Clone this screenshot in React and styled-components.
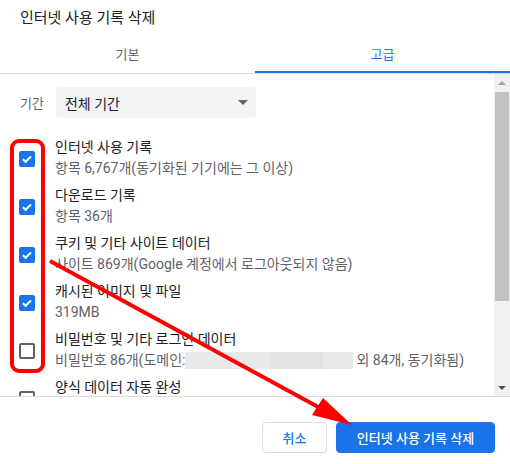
import React from 'react';
import styled, { createGlobalStyle } from 'styled-components';

const GlobalStyle = createGlobalStyle`
  html, body {
    margin: 0;
    padding: 0;
    background: #fff;
  }
  body {
    font-family: Roboto, "Noto Sans CJK KR", sans-serif;
    color: #202124;
  }
`;

const Dialog = styled.div`
  position: relative;
  width: 510px;
  height: 464px;
  background: #fff;
  display: flex;
  flex-direction: column;
  overflow: hidden;
`;

const Title = styled.div`
  height: 34px;
  box-sizing: border-box;
  padding: 8px 20px 0;
  font-size: 15px;
  line-height: 20px;
  color: #202124;
`;

const Tabs = styled.div`
  display: flex;
  border-bottom: 1px solid #dadce0;
`;

const Tab = styled.div`
  flex: 1;
  height: 39px;
  box-sizing: border-box;
  display: flex;
  align-items: center;
  justify-content: center;
  font-size: 13px;
  color: ${p => (p.$active ? '#1a73e8' : '#5f6368')};
  border-bottom: 2px solid ${p => (p.$active ? '#1a73e8' : 'transparent')};
  padding-top: 2px;
`;

const Body = styled.div`
  display: flex;
  height: 322px;
`;

const List = styled.div`
  flex: 1;
  overflow: hidden;
  padding: 13px 0 0 20px;
  display: flex;
  flex-direction: column;
`;

const PeriodRow = styled.div`
  display: flex;
  align-items: center;
  gap: 12px;
  margin-bottom: 19px;
`;

const PeriodLabel = styled.span`
  font-size: 13px;
  color: #5f6368;
`;

const Select = styled.div`
  width: 200px;
  height: 31px;
  box-sizing: border-box;
  background: #f1f3f4;
  border-radius: 4px;
  display: flex;
  align-items: center;
  justify-content: space-between;
  padding: 0 8px 0 9px;
  font-size: 14px;
  color: #202124;
`;

const Caret = styled.span`
  width: 0;
  height: 0;
  border-left: 5px solid transparent;
  border-right: 5px solid transparent;
  border-top: 5px solid #5f6368;
`;

const Rows = styled.div`
  display: flex;
  flex-direction: column;
  gap: 6px;
`;

const Row = styled.div`
  display: flex;
  align-items: center;
  gap: 20px;
  margin-left: -1px;
`;

const Box = styled.span`
  flex: none;
  width: 16px;
  height: 16px;
  box-sizing: border-box;
  border-radius: 2px;
  display: flex;
  align-items: center;
  justify-content: center;
  background: ${p => (p.$checked ? '#1a73e8' : '#fff')};
  border: 2px solid ${p => (p.$checked ? '#1a73e8' : '#5f6368')};
  margin-top: 2px;
`;

const Texts = styled.div`
  display: flex;
  flex-direction: column;
  white-space: nowrap;
`;

const ItemTitle = styled.div`
  font-size: 14px;
  line-height: 21px;
  color: #202124;
`;

const ItemSub = styled.div`
  font-size: 14px;
  line-height: 21px;
  color: #5f6368;
`;

const Redacted = styled.span`
  display: inline-block;
  width: 168px;
  height: 17px;
  vertical-align: -4px;
  margin-right: 3px;
  background: linear-gradient(to right, #e8e9eb 0 85px, #e3e3e3 85px 138px, #e9e9e9 138px);
`;

const ScrollBar = styled.div`
  width: 16px;
  background: #f1f1f1;
  display: flex;
  flex-direction: column;
  align-items: center;
`;

const ScrollArrow = styled.div`
  height: 17px;
  width: 100%;
  display: flex;
  align-items: center;
  justify-content: center;
  &::after {
    content: '';
    border-left: 4px solid transparent;
    border-right: 4px solid transparent;
    ${p =>
      p.$up
        ? 'border-bottom: 4px solid #a3a3a3;'
        : 'border-top: 4px solid #505050;'}
  }
`;

const Thumb = styled.div`
  width: 14px;
  height: 209px;
  margin-top: 1px;
  background: #c1c1c1;
`;

const Spacer = styled.div`
  flex: 1;
`;

const Footer = styled.div`
  border-top: 1px solid #dadce0;
  flex: 1;
  display: flex;
  justify-content: flex-end;
  align-items: flex-start;
  gap: 9px;
  padding: 25px 15px 0 0;
`;

const Button = styled.button`
  height: 31px;
  box-sizing: border-box;
  border-radius: 4px;
  font-family: Roboto, "Noto Sans CJK KR", sans-serif;
  font-size: 13px;
  font-weight: 500;
  padding: 0 10px;
  cursor: pointer;
  color: ${p => (p.$primary ? '#fff' : '#1a73e8')};
  background: ${p => (p.$primary ? '#1a73e8' : '#fff')};
  border: 1px solid ${p => (p.$primary ? '#1a73e8' : '#dadce0')};
  width: ${p => p.$w}px;
`;

const Highlight = styled.div`
  position: absolute;
  left: 10px;
  top: 139px;
  width: 35px;
  height: 234px;
  box-sizing: border-box;
  border: 4px solid #f00;
  border-radius: 9px;
  pointer-events: none;
`;

const ArrowLayer = styled.svg`
  position: absolute;
  left: 0;
  top: 0;
  pointer-events: none;
`;

const Check = () => (
  <svg width="12" height="12" viewBox="0 0 12 12">
    <path d="M2 6.2l2.6 2.6L10 3.4" fill="none" stroke="#fff" strokeWidth="2" />
  </svg>
);

const items = [
  { title: '인터넷 사용 기록', sub: '항목 6,767개(동기화된 기기에는 그 이상)', checked: true },
  { title: '다운로드 기록', sub: '항목 36개', checked: true },
  { title: '쿠키 및 기타 사이트 데이터', sub: '사이트 869개(Google 계정에서 로그아웃되지 않음)', checked: true },
  { title: '캐시된 이미지 및 파일', sub: '319MB', checked: true },
  {
    title: '비밀번호 및 기타 로그인 데이터',
    sub: (
      <>
        비밀번호 86개(도메인:<Redacted />외 84개, 동기화됨)
      </>
    ),
    checked: false,
  },
  { title: '양식 데이터 자동 완성', sub: '', checked: false },
];

export default function App() {
  return (
    <>
      <GlobalStyle />
      <Dialog>
        <Title>인터넷 사용 기록 삭제</Title>
        <Tabs>
          <Tab>기본</Tab>
          <Tab $active>고급</Tab>
        </Tabs>
        <Body>
          <List>
            <PeriodRow>
              <PeriodLabel>기간</PeriodLabel>
              <Select>
                전체 기간
                <Caret />
              </Select>
            </PeriodRow>
            <Rows>
              {items.map((it, i) => (
                <Row key={i}>
                  <Box $checked={it.checked}>{it.checked && <Check />}</Box>
                  <Texts>
                    <ItemTitle>{it.title}</ItemTitle>
                    <ItemSub>{it.sub || '\u00a0'}</ItemSub>
                  </Texts>
                </Row>
              ))}
            </Rows>
          </List>
          <ScrollBar>
            <ScrollArrow $up />
            <Thumb />
            <Spacer />
            <ScrollArrow />
          </ScrollBar>
        </Body>
        <Footer>
          <Button $w={65}>취소</Button>
          <Button $primary $w={159}>인터넷 사용 기록 삭제</Button>
        </Footer>
        <Highlight />
        <ArrowLayer width="510" height="464" viewBox="0 0 510 464">
          <line x1="50" y1="261" x2="320" y2="408" stroke="#f00" strokeWidth="4" />
          <polygon points="352,425 312,415 323,398" fill="#f00" />
        </ArrowLayer>
      </Dialog>
    </>
  );
}
